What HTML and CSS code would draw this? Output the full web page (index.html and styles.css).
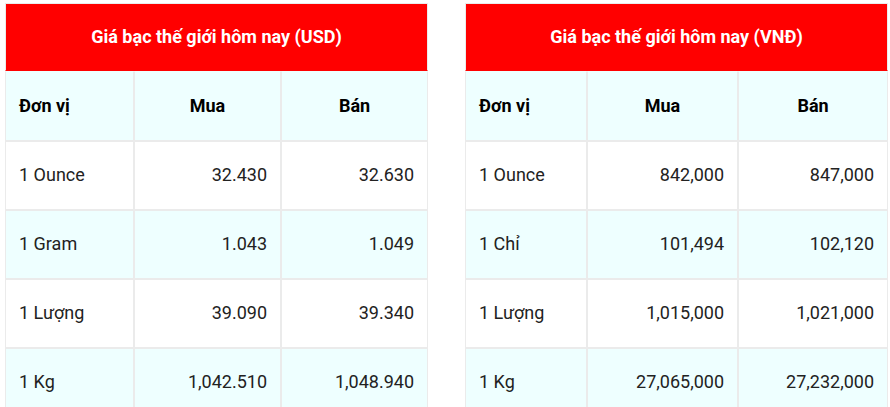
FILE: index.html
```html
<!DOCTYPE html>
<html lang="vi">
<head>
<meta charset="utf-8">
<title>Giá bạc thế giới</title>
<link rel="stylesheet" href="styles.css">
</head>
<body>
<div class="wrap">
  <table class="price usd">
    <colgroup><col class="c1"><col class="c2"><col class="c3"></colgroup>
    <thead>
      <tr><th class="title" colspan="3">Giá bạc thế giới hôm nay (USD)</th></tr>
      <tr class="sub">
        <th class="left">Đơn vị</th>
        <th>Mua</th>
        <th>Bán</th>
      </tr>
    </thead>
    <tbody>
      <tr><td class="left">1 Ounce</td><td class="num">32.430</td><td class="num">32.630</td></tr>
      <tr class="alt"><td class="left">1 Gram</td><td class="num">1.043</td><td class="num">1.049</td></tr>
      <tr><td class="left">1 Lượng</td><td class="num">39.090</td><td class="num">39.340</td></tr>
      <tr class="alt"><td class="left">1 Kg</td><td class="num">1,042.510</td><td class="num">1,048.940</td></tr>
    </tbody>
  </table>
  <table class="price vnd">
    <colgroup><col class="c1"><col class="c2"><col class="c3"></colgroup>
    <thead>
      <tr><th class="title" colspan="3">Giá bạc thế giới hôm nay (VNĐ)</th></tr>
      <tr class="sub">
        <th class="left">Đơn vị</th>
        <th>Mua</th>
        <th>Bán</th>
      </tr>
    </thead>
    <tbody>
      <tr><td class="left">1 Ounce</td><td class="num">842,000</td><td class="num">847,000</td></tr>
      <tr class="alt"><td class="left">1 Chỉ</td><td class="num">101,494</td><td class="num">102,120</td></tr>
      <tr><td class="left">1 Lượng</td><td class="num">1,015,000</td><td class="num">1,021,000</td></tr>
      <tr class="alt"><td class="left">1 Kg</td><td class="num">27,065,000</td><td class="num">27,232,000</td></tr>
    </tbody>
  </table>
</div>
</body>
</html>
```

FILE: styles.css
```css
html, body {
  margin: 0;
  padding: 0;
  background: #ffffff;
}

body {
  font-family: Roboto, "Liberation Sans", Arial, sans-serif;
  font-size: 18px;
  color: #222222;
}

.wrap {
  display: flex;
  gap: 37px;
  padding: 3px 0 0 5px;
  align-items: flex-start;
}

.price {
  border-collapse: separate;
  border-spacing: 0;
  table-layout: fixed;
  width: 423px;
}

.price th,
.price td {
  box-sizing: border-box;
  border: 1px solid #ebebeb;
  padding: 0 13px 2px;
  height: 69px;
  vertical-align: middle;
  line-height: 21px;
}

.price .title {
  height: 68px;
  background: #ff0000;
  color: #ffffff;
  font-weight: 700;
  text-align: center;
  border-bottom-color: #ff0000;
  padding: 0 10px 2px;
}

.price .sub th {
  height: 70px;
  background: #eeffff;
  color: #000000;
  font-weight: 700;
  text-align: center;
  border-top-color: #eeffff;
}

.price .sub th.left,
.price td.left {
  text-align: left;
}

.price td.num {
  text-align: right;
}

.price tr.alt td {
  background: #eeffff;
}

.usd .c1 { width: 129px; }
.usd .c2 { width: 147px; }
.usd .c3 { width: 147px; }

.vnd .c1 { width: 122px; }
.vnd .c2 { width: 151px; }
.vnd .c3 { width: 150px; }
```
